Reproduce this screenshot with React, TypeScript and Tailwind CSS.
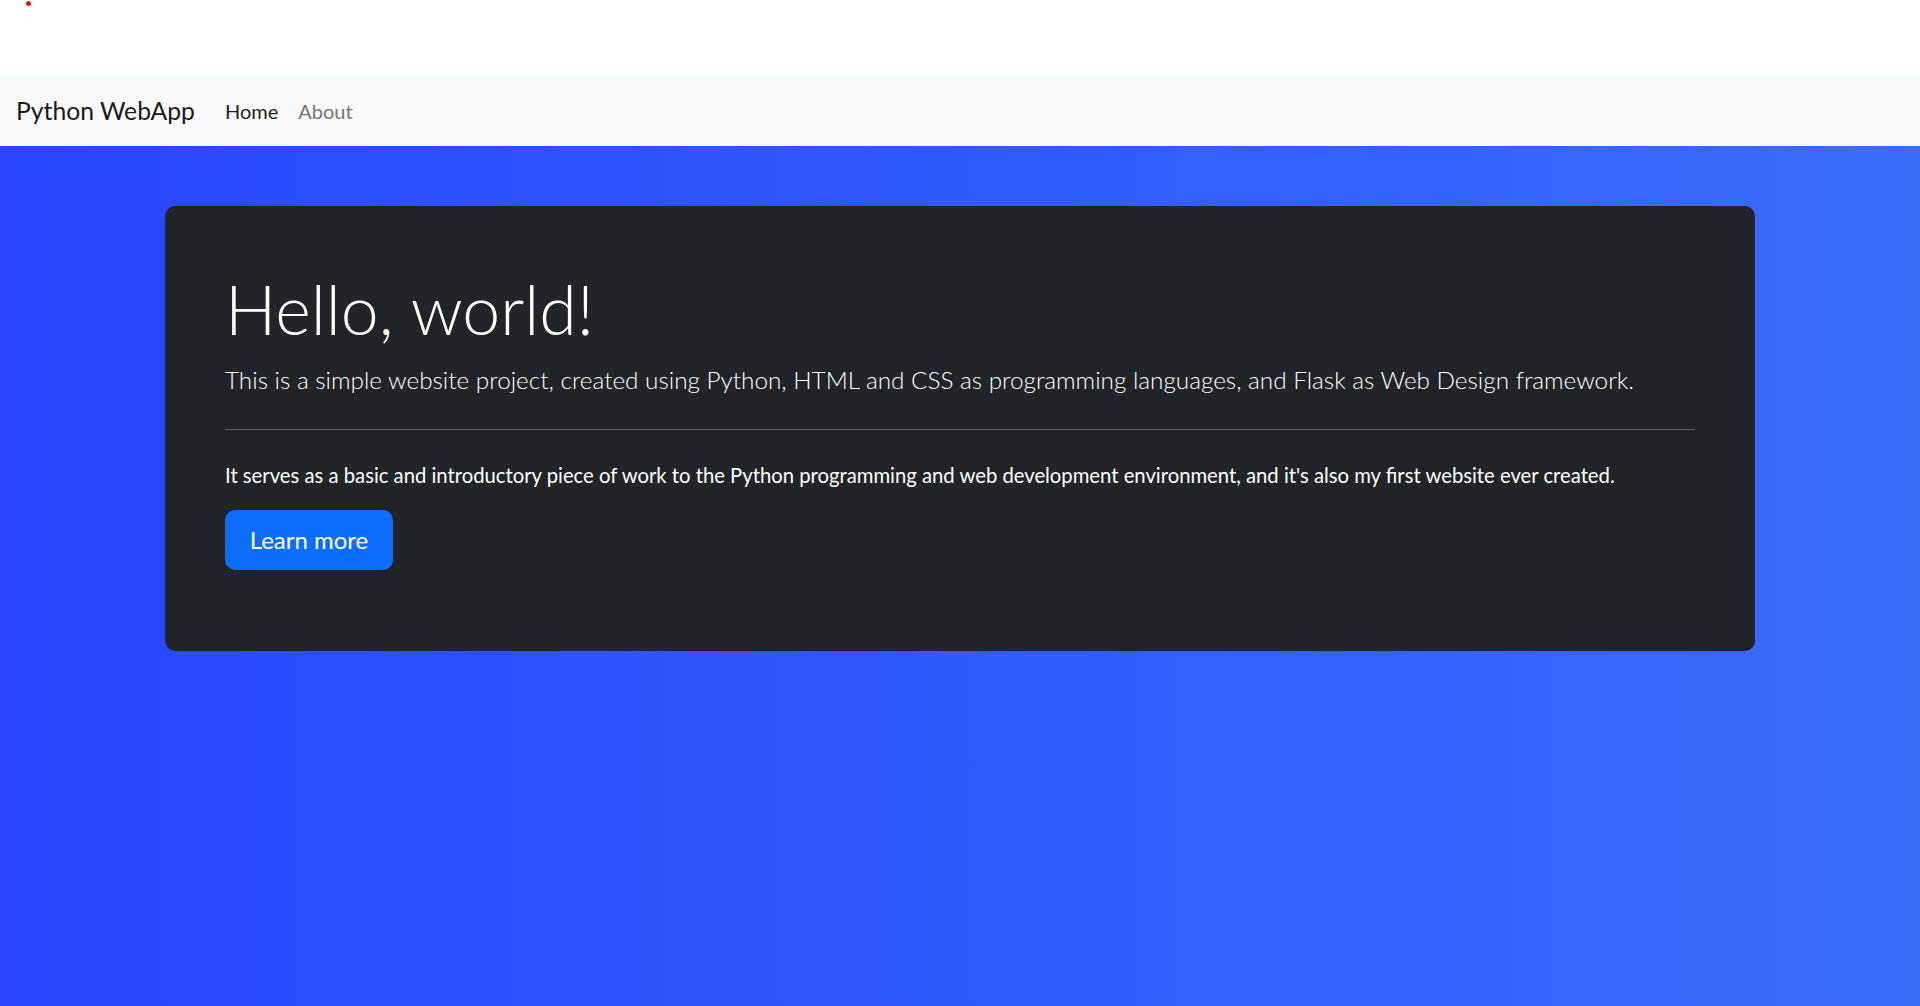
export default function App() {
  return (
    <div className="flex h-screen flex-col font-['Lato','Noto_Sans',sans-serif]">
      {/* top strip */}
      <div className="relative h-[76px] shrink-0 bg-white">
        <span className="absolute left-[26px] top-[1px] h-[5px] w-[5px] rounded-full bg-[#d21f1f]" />
      </div>

      {/* Navbar */}
      <nav className="flex h-[70px] shrink-0 items-center bg-[#f8f9fa] pl-[16px]">
        <a href="#" className="mr-[30px] text-[24.7px] text-[#1a1a1a] no-underline">
          Python WebApp
        </a>
        <ul className="flex list-none items-center gap-[20px]">
          <li>
            <a href="#" className="text-[20px] text-[#1e1e1e] no-underline">
              Home
            </a>
          </li>
          <li>
            <a href="#" className="text-[20px] text-[#757575] no-underline">
              About
            </a>
          </li>
        </ul>
      </nav>

      {/* Hero */}
      <main className="flex-1 bg-gradient-to-r from-[#2a44ff] to-[#3a6cfa] pt-[60px]">
        <div className="mx-auto w-[1590px] rounded-[10px] bg-[#212529] px-[60px] pt-[61px] pb-[81px] text-white">
          <h1 className="text-[68px] font-light leading-[84px]">Hello, world!</h1>
          <p className="mt-[10px] text-[24.3px] font-light leading-[37.5px] text-white">
            This is a simple website project, created using Python, HTML and CSS as programming
            languages, and Flask as Web Design framework.
          </p>
          <hr className="my-[30px] border-t border-[#5b5e62]" />
          <p className="text-[20.25px] leading-[30px]">
            It serves as a basic and introductory piece of work to the Python programming and web
            development environment, and it's also my first website ever created.
          </p>
          <a
            href="#"
            className="mt-[20px] inline-flex h-[60px] w-[168px] items-center justify-center rounded-[10px] bg-[#0d6efd] text-[24px] text-white no-underline"
          >
            Learn more
          </a>
        </div>
      </main>
    </div>
  );
}
